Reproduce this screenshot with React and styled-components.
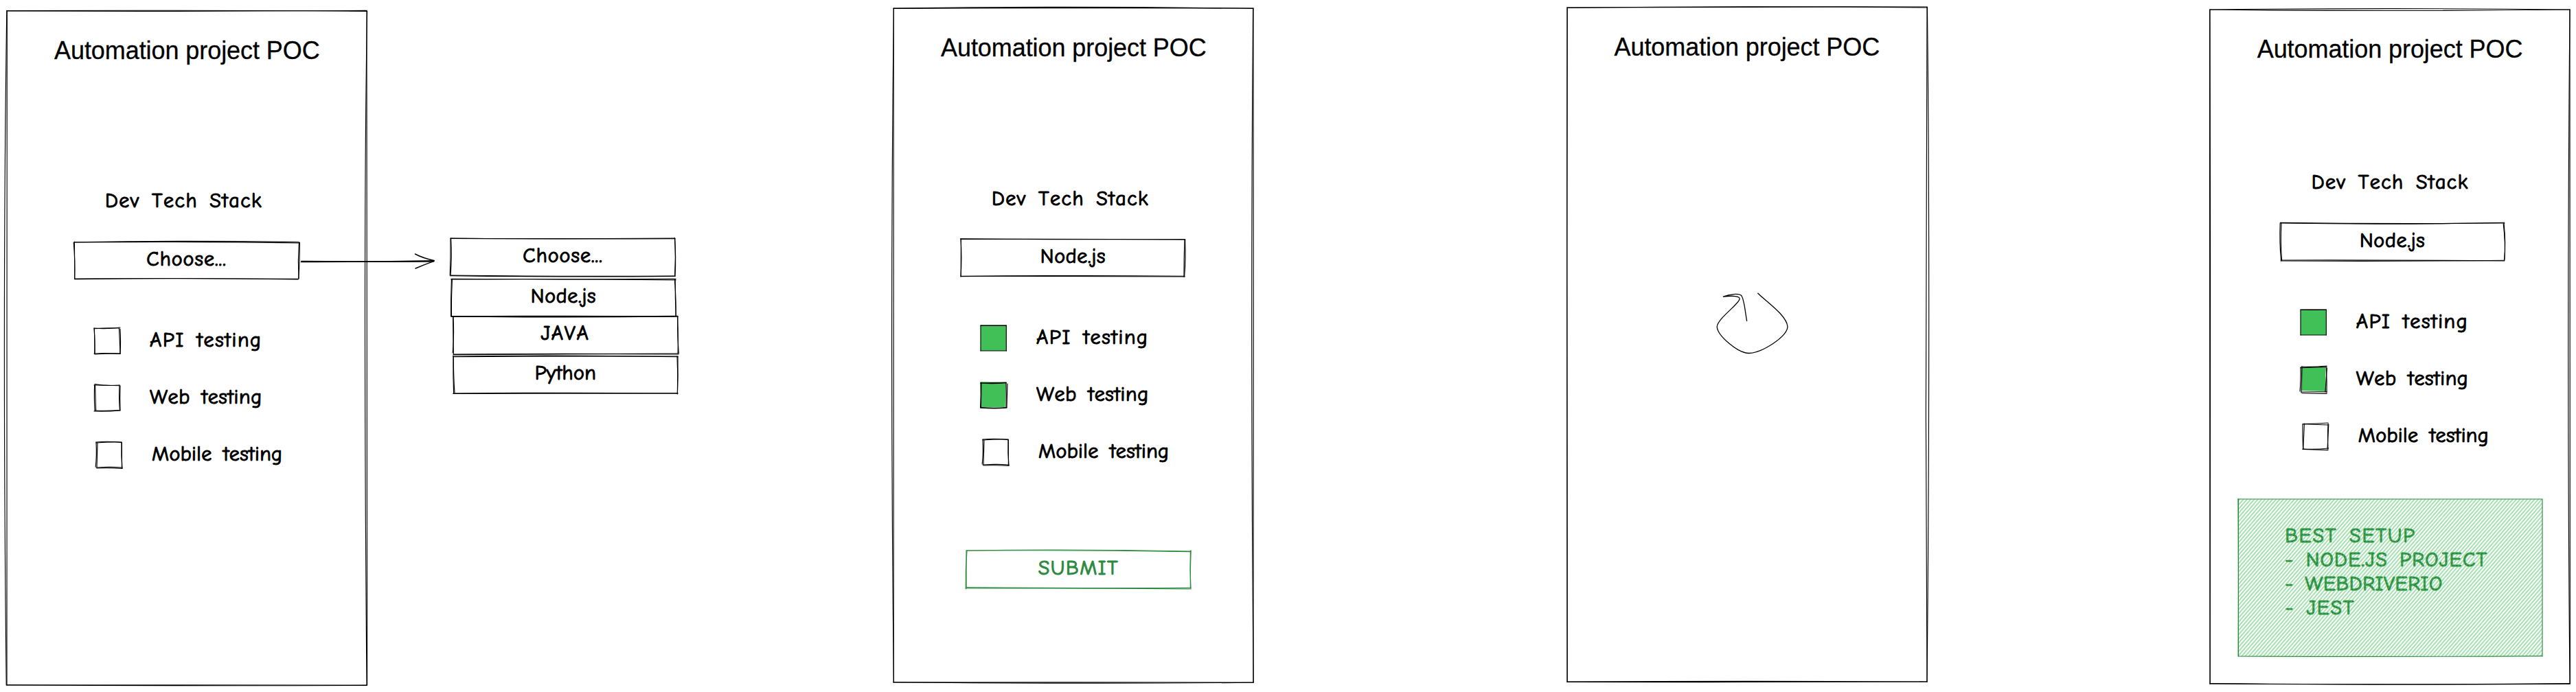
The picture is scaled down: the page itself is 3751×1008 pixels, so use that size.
import React from 'react';
import styled, { createGlobalStyle } from 'styled-components';

const INK = '#000000';
const LEAF = '#40c057';
const FOREST = '#2b8a3e';

const GlobalStyle = createGlobalStyle`
  * { box-sizing: border-box; }
  body { margin: 0; background: #ffffff; color: ${INK}; }
`;

const Board = styled.main`
  width: 3751px;
  height: 1008px;
  padding-left: 10px;
  display: flex;
  align-items: flex-start;
  overflow: hidden;
`;

/* A plain box whose outline is drawn by hand on top of it. */
const Sketched = styled.div`
  position: relative;
  flex: none;
  width: ${p => p.$w}px;
  height: ${p => p.$h}px;
`;

const Outline = styled.svg`
  position: absolute;
  inset: 0;
  width: 100%;
  height: 100%;
  overflow: visible;
  fill: none;
  stroke: ${p => p.$color || INK};
  stroke-width: 1.15px;
  stroke-linecap: round;
  pointer-events: none;
`;

const Screen = styled(Sketched).attrs({ as: 'section' })`
  margin: ${p => p.$top}px 0 0 ${p => p.$gap || 0}px;
  display: flex;
  flex-direction: column;
  align-items: flex-start;
`;

const Title = styled.h1`
  margin: 37px 0 0 69px;
  height: 41px;
  font: 400 36px/41px 'Liberation Sans', Arial, sans-serif;
  letter-spacing: -0.07px;
  white-space: nowrap;
  -webkit-text-stroke: 0.3px ${INK};
`;

const Hand = styled.span`
  display: block;
  font: 400 30px/35px 'Comic Neue', 'Open Sans', sans-serif;
  font-kerning: none;
  letter-spacing: ${p => p.$track || 0}px;
  word-spacing: 6px;
  white-space: nowrap;
  color: ${p => p.$color || INK};
  -webkit-text-stroke: 1.1px ${p => p.$color || INK};
`;

const StackLabel = styled(Hand)`
  margin: ${p => p.$top}px 0 0 ${p => p.$left || 143}px;
`;

const Field = styled(Sketched)`
  display: flex;
  align-items: center;
  justify-content: center;
  padding-bottom: 4px;
  margin: ${p => p.$top || 0}px 0 0 ${p => p.$left || 0}px;
`;

const CheckList = styled.div`
  display: flex;
  flex-direction: column;
  gap: 46px;
  margin: ${p => p.$top}px 0 0 ${p => p.$left || 127}px;
`;

const CheckRow = styled.label`
  display: flex;
  align-items: center;
  gap: 44px;
  height: 37px;
  padding-left: ${p => p.$indent || 0}px;
`;

const CheckText = styled(Hand)`
  margin-bottom: 2px;
`;

const Connector = styled.svg`
  flex: none;
  width: 196px;
  height: 24px;
  margin: 369px 0 0 -96px;
  overflow: visible;
  fill: none;
  stroke: ${INK};
  stroke-width: 1.5px;
  stroke-linecap: round;
`;

const Options = styled.div`
  flex: none;
  display: flex;
  flex-direction: column;
  width: 331px;
  margin: 347px 0 0 22px;
`;

const Spinner = styled.svg`
  width: 106px;
  height: 92px;
  margin: 344px 0 0 217px;
  overflow: visible;
  fill: none;
  stroke: ${INK};
  stroke-width: 1.3px;
  stroke-linecap: round;
`;

const Result = styled(Sketched)`
  margin: 73px 0 0 41px;
  padding: 36.5px 0 0 68.5px;
`;

function Box({ as: Shell = Field, lines, color, fill, children, ...rest }) {
  return (
    <Shell {...rest}>
      <Outline $color={color}>
        {fill && <path d={fill} fill={LEAF} stroke="none" />}
        {lines.map(d => <path key={d} d={d} />)}
      </Outline>
      {children}
    </Shell>
  );
}

const FRAMES = {
  choose: [
    'M0 0 Q260 1 524 -0.6', 'M-0.4 -0.4 Q270 -1.4 524.4 0.4',
    'M0.3 0 C-0.3 300 0.4 700 0 982', 'M-0.2 0 C-4.6 300 -4.6 640 -0.8 982',
    'M524.6 0 C520.6 230 521 620 524 982', 'M524 0 C521.4 260 521.6 560 524.6 982',
    'M0 982 Q262 981.4 524 982', 'M0 981.6 Q262 983.4 524 982.4',
  ],
  ready: [
    'M0 0 Q262 -3.4 524 0.4', 'M0.2 0.4 Q262 -1 524 0',
    'M0.2 0 C0.4 300 0.6 640 0.2 982', 'M0.4 0 C-3.6 330 -3.6 620 0.4 982',
    'M524 0 C523.4 300 525.4 700 524 982', 'M523.6 0 C520.8 330 520.8 620 524.2 982',
    'M0 982 Q262 981.6 524 982', 'M0 981.6 Q262 984.4 524 982.2',
  ],
  loading: [
    'M0 0 Q262 -1.4 524 -1', 'M0 0.4 Q250 -2.6 524 0',
    'M0.2 0 C-1 330 0.4 640 0.2 982', 'M0 0 C0 320 -1.6 600 0 982',
    'M524 -0.6 C522 300 521.6 660 524 982', 'M524.4 -0.6 C528 300 527 700 524 982',
    'M0 982 Q262 980.8 524 982', 'M0 982.4 Q262 983 524 982',
  ],
  done: [
    'M0 0 Q262 -2.8 524 0', 'M0 0 Q262 3 524 0',
    'M0 0 C0.8 330 0.6 640 0.2 982', 'M-0.4 0 C-0.4 320 -0.4 600 0 982',
    'M524 0 C521 330 520.4 600 524 982', 'M524 0 C524 320 524.6 600 524.4 982',
    'M0 982 Q262 984 524 981.6', 'M0 981.6 Q262 984 524 982.2',
  ],
};

const WIDE = {
  a: ['M0 0.8 Q160 -2 327 0.6', 'M1 1 Q170 -0.6 328 2', 'M-0.8 1 Q1.6 28 0.6 54', 'M0.4 0 L0.8 54',
    'M327.4 1 Q325.6 28 327 54', 'M328.4 1 Q328.4 30 326.8 54', 'M0.6 54 Q164 52.6 326 55', 'M0.6 54.6 Q164 53 326 54.4'],
  b: ['M-0.6 -0.2 Q160 1.2 326 0.6', 'M0 0.4 Q160 -0.2 327 1', 'M0 0 Q1.8 28 0 55', 'M0.4 0 L0.2 54',
    'M326.6 1 Q328 28 325.6 55', 'M326 1 Q325 30 325 55', 'M0 54.6 Q160 52.8 326 54.2', 'M0 54.2 Q164 55 326 55'],
  c: ['M-0.6 -0.6 Q160 1.6 326 0', 'M0 0 Q160 2.6 325.6 -0.8', 'M-0.8 0 Q-2 28 0.6 55', 'M1 0 Q-0.6 28 1.6 54',
    'M325 0 Q328 28 325.6 54', 'M324.2 1 Q327.6 30 326 53', 'M0 54 Q160 53.6 325.6 55', 'M0.4 55 Q164 56 326 54.2'],
  submit: ['M0 0 Q160 -2.4 327 1', 'M1 0 Q160 -1 326 1.6', 'M0 0 L0.2 55', 'M1 0 Q-1.4 28 -0.8 56',
    'M326.4 0 Q325.4 28 327 55', 'M327.2 0 Q326 30 326.4 55', 'M0 53.6 Q160 55 327 54.4', 'M0 55 Q164 54.4 327 56'],
};

const OPTION_LINES = [
  ['M0 0 Q160 1.4 327 0.6', 'M0.4 0.4 Q160 1 326.4 0', 'M0 0 Q0.4 28 -0.8 54', 'M0.6 0 Q2.2 28 0 55',
    'M326.4 -0.6 Q328.6 28 327 55', 'M326.8 0 Q328 28 326.6 55', 'M0 54 Q160 56 327 55', 'M0.8 54.6 Q164 56.8 327 55.4'],
  ['M0 -0.6 Q160 0.2 327 -0.6', 'M0 0 Q160 -1.4 327 1', 'M0.4 0 Q-0.6 28 -0.4 54', 'M1.4 0 Q0 28 0.4 54',
    'M326.2 0 Q326 28 327.4 54', 'M325.4 0 Q327.6 28 327 54', 'M0 54 Q160 52.6 327 54', 'M0 53.6 Q160 55 327 53.6'],
  ['M-2 0 Q160 2 327 0', 'M-1 0 Q160 1 327 -0.6', 'M0 1 Q1.4 28 -0.8 53', 'M-0.4 0 Q-0.2 28 0.4 55',
    'M327 0 Q326 28 328.4 54', 'M326.4 0 Q328 28 327 54', 'M0 55.6 Q160 54.6 327 54', 'M0.4 55 Q160 53.8 328 55'],
  ['M0 0 Q160 -2 327 0.8', 'M0 0.8 Q160 -0.6 327 0', 'M0 -1 Q-0.4 28 0.6 54', 'M0.4 0 Q0.2 28 2 53',
    'M327 0 Q327.4 28 326.4 55', 'M326 0 Q327.4 28 326.4 54', 'M0 54 Q160 52.6 327 54', 'M0 54.4 Q164 53.6 327 53.8'],
];

const TICK = {
  a: ['M0 0 Q18 1.6 38 -1', 'M0 0.6 Q20 -0.6 36 0', 'M0 0 Q1.6 20 0.6 37', 'M0.4 0 L1.2 38',
    'M36.4 0 Q37.4 20 38 37', 'M38 1 Q39 20 38 37', 'M0 37 Q18 36 38 37.4', 'M2 38 Q18 36.6 38 37'],
  b: ['M1 -1.4 Q18 1.4 37 0', 'M0 0 Q20 0 37 0.8', 'M0.6 0 Q0 20 1 37', 'M1.6 0 L2.6 37',
    'M37 0 Q36 20 37.4 36', 'M38 1 Q37.4 20 38 37', 'M0 38 Q20 38.6 37.4 37', 'M1 37 Q20 37.6 38 36.6'],
  c: ['M0 0 Q18 -1.8 37 0.6', 'M0 1 Q20 -0.4 37 0', 'M0 0 Q1 20 -0.8 36', 'M2 1 L1 37',
    'M37 0 Q36.4 20 38 38', 'M37.4 1 L37.4 37', 'M0 37 Q20 35.8 38 37', 'M1 38 Q20 37.4 38 38.4'],
  d: ['M0 0 H37.4', 'M0 0.3 H37', 'M0 0 V37', 'M37.3 0 V37', 'M0 37 H37.4'],
  e: ['M0 1 L37 0', 'M0 1 Q18 2.4 37.4 0.6', 'M0 0 Q0.6 18 -0.4 37', 'M1 1 L0.4 37',
    'M37 1 Q37.4 20 37 36', 'M39 2 L38 36', 'M0 37 Q20 39 38 37', 'M0 36.6 Q20 38 38 36.6'],
  f: ['M1 0 Q18 1 38 -1', 'M0 1.6 L38 0.4', 'M2 0 Q1.6 20 1 38', 'M0 1 Q0.4 20 -1 36',
    'M37 0 Q38.6 20 38 38', 'M38.4 2 L36 37', 'M1 37 Q20 36.6 38 36.8', 'M2 38.8 L38 39.4'],
  g: ['M0 0.6 Q20 0 37 -1', 'M1 0.6 L37 2', 'M0 1 Q-0.4 20 0.6 37', 'M2.4 0 L0.8 37',
    'M37 0 Q36 20 37 37', 'M37.8 1 Q37 20 36 37', 'M0 37 Q20 38 37.4 36', 'M0 37.4 L37 38.6'],
};

const FULL = 'M0 0 H37.3 V37 H0 Z';

const CHECKS = [
  { text: 'API testing', track: 1.6 },
  { text: 'Web testing', track: 0.6 },
  { text: 'Mobile testing', track: 0.35 },
];

function Checks({ top, left, marks }) {
  return (
    <CheckList $top={top} $left={left}>
      {CHECKS.map(({ text, track }, i) => (
        <CheckRow key={text} $indent={i === 2 ? 3 : 0}>
          <Box as={Sketched} $w={37} $h={37} lines={TICK[marks[i].shape]} fill={marks[i].fill} />
          <CheckText $track={track}>{text}</CheckText>
        </CheckRow>
      ))}
    </CheckList>
  );
}

const OPTIONS = [
  { text: 'Choose...', track: 1, left: 0, top: 0, h: 55 },
  { text: 'Node.js', track: 0.7, left: 1, top: 4.5, h: 54 },
  { text: 'JAVA', track: 1.6, left: 3.5, top: 0, h: 54 },
  { text: 'Python', track: 0.4, left: 4, top: 4, h: 54 },
];

const RESULT = [
  { text: 'BEST SETUP', track: 1.8 },
  { text: '- NODE.JS PROJECT', track: 1.2 },
  { text: '- WEBDRIVERIO', track: 0.55 },
  { text: '- JEST', track: 1.6 },
];

export default function App() {
  return (
    <>
      <GlobalStyle />
      <Board>
        <Box as={Screen} $w={524} $h={982} $top={16} lines={FRAMES.choose}>
          <Title>Automation project POC</Title>
          <StackLabel $top={181} $track={1.4}>Dev Tech Stack</StackLabel>
          <Box $w={328} $h={55} $top={41.5} $left={97.5} lines={WIDE.a}>
            <Hand $track={1}>Choose...</Hand>
          </Box>
          <Checks top={71} marks={[{ shape: 'a' }, { shape: 'b' }, { shape: 'c' }]} />
        </Box>

        <Connector>
          <path d="M0.5 12.4 Q90 12.6 194 10.8" />
          <path d="M1 11.6 Q100 12.4 193 12" />
          <path d="M166.5 1 Q178 7 194 10.6" />
          <path d="M167 22 Q180 16.4 194 11.4" />
        </Connector>

        <Options>
          {OPTIONS.map((o, i) => (
            <Box key={o.text} $w={327} $h={o.h} $top={o.top} $left={o.left} lines={OPTION_LINES[i]}>
              <Hand $track={o.track}>{o.text}</Hand>
            </Box>
          ))}
        </Options>

        <Box as={Screen} $w={524} $h={982} $top={11.5} $gap={314} lines={FRAMES.ready}>
          <Title>Automation project POC</Title>
          <StackLabel $top={182} $track={1.4}>Dev Tech Stack</StackLabel>
          <Box $w={327} $h={55} $top={41} $left={98} lines={WIDE.b}>
            <Hand $track={0.7}>Node.js</Hand>
          </Box>
          <Checks
            top={71}
            marks={[
              { shape: 'd', fill: FULL },
              { shape: 'e', fill: 'M0 -1 L37 0 L35.6 36 L0 36.4 Z' },
              { shape: 'c' },
            ]}
          />
          <Box $w={327} $h={55} $top={125} $left={106} color={FOREST} lines={WIDE.submit}>
            <Hand $track={1.5} $color={FOREST}>SUBMIT</Hand>
          </Box>
        </Box>

        <Box as={Screen} $w={524} $h={982} $top={10.5} $gap={456.5} lines={FRAMES.loading}>
          <Title>Automation project POC</Title>
          <Spinner>
            <path d="M60.8 -5.8 C70 4 103 26 104 43 C103 58 66 81 48 81.5 C32 82 2 56 1.2 43 C2 31 31 12 34 3 C35 -2 24 -2.6 10 -0.8 C20 -5 34 -6 37 -2 C41 4 42 20 44.6 34.4" />
          </Spinner>
        </Box>

        <Box as={Screen} $w={524} $h={982} $top={13.5} $gap={412.2} lines={FRAMES.done}>
          <Title>Automation project POC</Title>
          <StackLabel $top={156.5} $left={148} $track={1.4}>Dev Tech Stack</StackLabel>
          <Box $w={326} $h={55} $top={41.5} $left={103} lines={WIDE.c}>
            <Hand $track={0.7}>Node.js</Hand>
          </Box>
          <Checks
            top={71}
            left={132}
            marks={[
              { shape: 'd', fill: FULL },
              { shape: 'f', fill: 'M1 1 H36 L37 36 L1 35 Z' },
              { shape: 'g' },
            ]}
          />
          <Result $w={443} $h={229}>
            <Outline $color={FOREST}>
              <defs>
                <pattern id="hatch" width="4" height="4" patternUnits="userSpaceOnUse" patternTransform="rotate(41)">
                  <path d="M2 0 V4" stroke={LEAF} strokeWidth="0.95" strokeLinecap="butt" />
                </pattern>
              </defs>
              <rect width="443" height="229" fill="url(#hatch)" stroke="none" />
              <path d="M0 0 H443 V229" />
              <path d="M0 -0.4 Q0.8 110 0.2 229 Q220 230 443 228.6" />
              <path d="M0.4 0 V229" />
            </Outline>
            {RESULT.map(r => (
              <Hand key={r.text} $track={r.track} $color={FOREST}>{r.text}</Hand>
            ))}
          </Result>
        </Box>
      </Board>
    </>
  );
}
